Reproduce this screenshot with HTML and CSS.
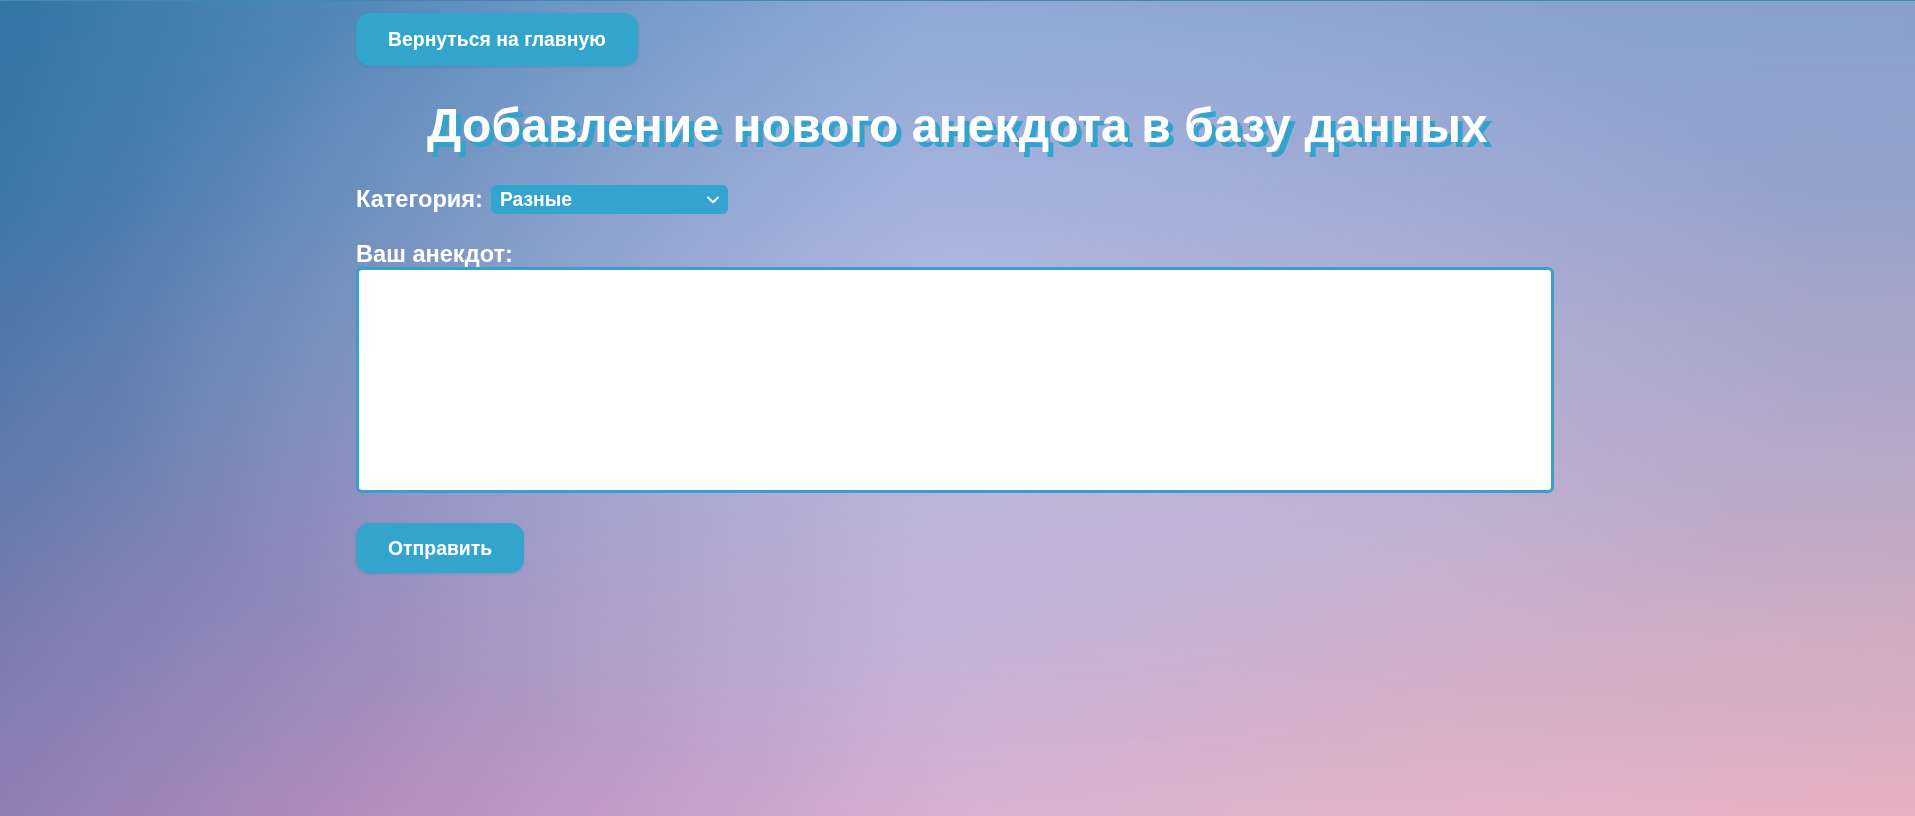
FILE: index.html
```html
<!DOCTYPE html>
<html lang="ru">
<head>
<meta charset="utf-8">
<title>Добавление анекдота</title>
<link rel="stylesheet" href="styles.css">
</head>
<body>
<div class="bg-bottom"></div>
<div class="bg-glow"></div>
<main class="page">
  <a class="btn btn-back" href="#">Вернуться на главную</a>
  <h1 class="title">Добавление нового анекдота в базу данных</h1>
  <form class="form">
    <div class="row">
      <label class="label">Категория:</label>
      <div class="select">
        <span class="select-value">Разные</span>
        <svg class="chevron" width="14" height="8" viewBox="0 0 14 8"><path d="M2 1.5 L7 6.2 L12 1.5" fill="none" stroke="#fff" stroke-width="2" stroke-linecap="round" stroke-linejoin="round"/></svg>
      </div>
    </div>
    <label class="label label-block">Ваш анекдот:</label>
    <textarea class="textarea"></textarea>
    <button class="btn btn-submit" type="button">Отправить</button>
  </form>
</main>
</body>
</html>
```

FILE: styles.css
```css
html {
  height: 100%;
  background: linear-gradient(to right, #3176a7 0%, #5a8cbc 22%, #86a4d4 48%, #8aa2d0 75%, #88a0cc 100%);
}
body {
  margin: 0;
  min-height: 100%;
  border-top: 1px solid #3d8cab;
  box-sizing: border-box;
  font-family: "Liberation Sans", Arial, sans-serif;
  color: #fff;
  position: relative;
}
.bg-bottom {
  position: fixed;
  inset: 0;
  z-index: -2;
  background: linear-gradient(to right, #917eb2 0%, #b48ebe 20%, #d6b2d2 50%, #e2b2c8 75%, #e6b0c0 100%);
  -webkit-mask-image: linear-gradient(to bottom, transparent 0%, rgba(0,0,0,0.15) 25%, #000 100%);
  mask-image: linear-gradient(to bottom, transparent 0%, rgba(0,0,0,0.15) 25%, #000 100%);
}
.bg-glow {
  position: fixed;
  inset: 0;
  z-index: -1;
  background: radial-gradient(ellipse 45% 55% at 50% 40%, rgba(220, 215, 245, 0.35), rgba(220, 215, 245, 0) 100%);
}
.page {
  width: 1203px;
  margin: 0 auto;
  padding-top: 12px;
}
.btn {
  display: inline-flex;
  align-items: center;
  justify-content: center;
  box-sizing: border-box;
  background: #33a5cd;
  color: #fff;
  font-family: inherit;
  font-weight: bold;
  font-size: 19.4px;
  border: none;
  border-radius: 14px;
  text-decoration: none;
  padding: 0 32px;
  box-shadow: 0 1px 3px rgba(0, 60, 100, 0.15);
}
.btn-back {
  height: 53px;
}
.title {
  margin: 32px 0 0;
  text-align: center;
  font-size: 48px;
  font-weight: bold;
  line-height: 55px;
  letter-spacing: 0.1px;
  color: #fff;
  text-shadow: 5px 5px 0 #31a3cd;
}
.form {
  display: flex;
  flex-direction: column;
  align-items: flex-start;
  margin-top: 32px;
}
.row {
  display: flex;
  align-items: center;
  gap: 8px;
}
.label {
  font-size: 23.6px;
  font-weight: bold;
  color: #fff;
}
.select {
  width: 237px;
  height: 29px;
  box-sizing: border-box;
  background: #33a3d0;
  border-radius: 6px;
  display: flex;
  align-items: center;
  justify-content: space-between;
  padding: 0 8px 0 9px;
  font-size: 19.3px;
  font-weight: bold;
}
.label-block {
  margin-top: 27px;
  line-height: 26px;
}
.textarea {
  width: 1198px;
  height: 226px;
  box-sizing: border-box;
  border: 3px solid #3a9fc9;
  border-radius: 6px;
  background: #fff;
  resize: none;
}
.btn-submit {
  margin-top: 30px;
  height: 50px;
}
```
